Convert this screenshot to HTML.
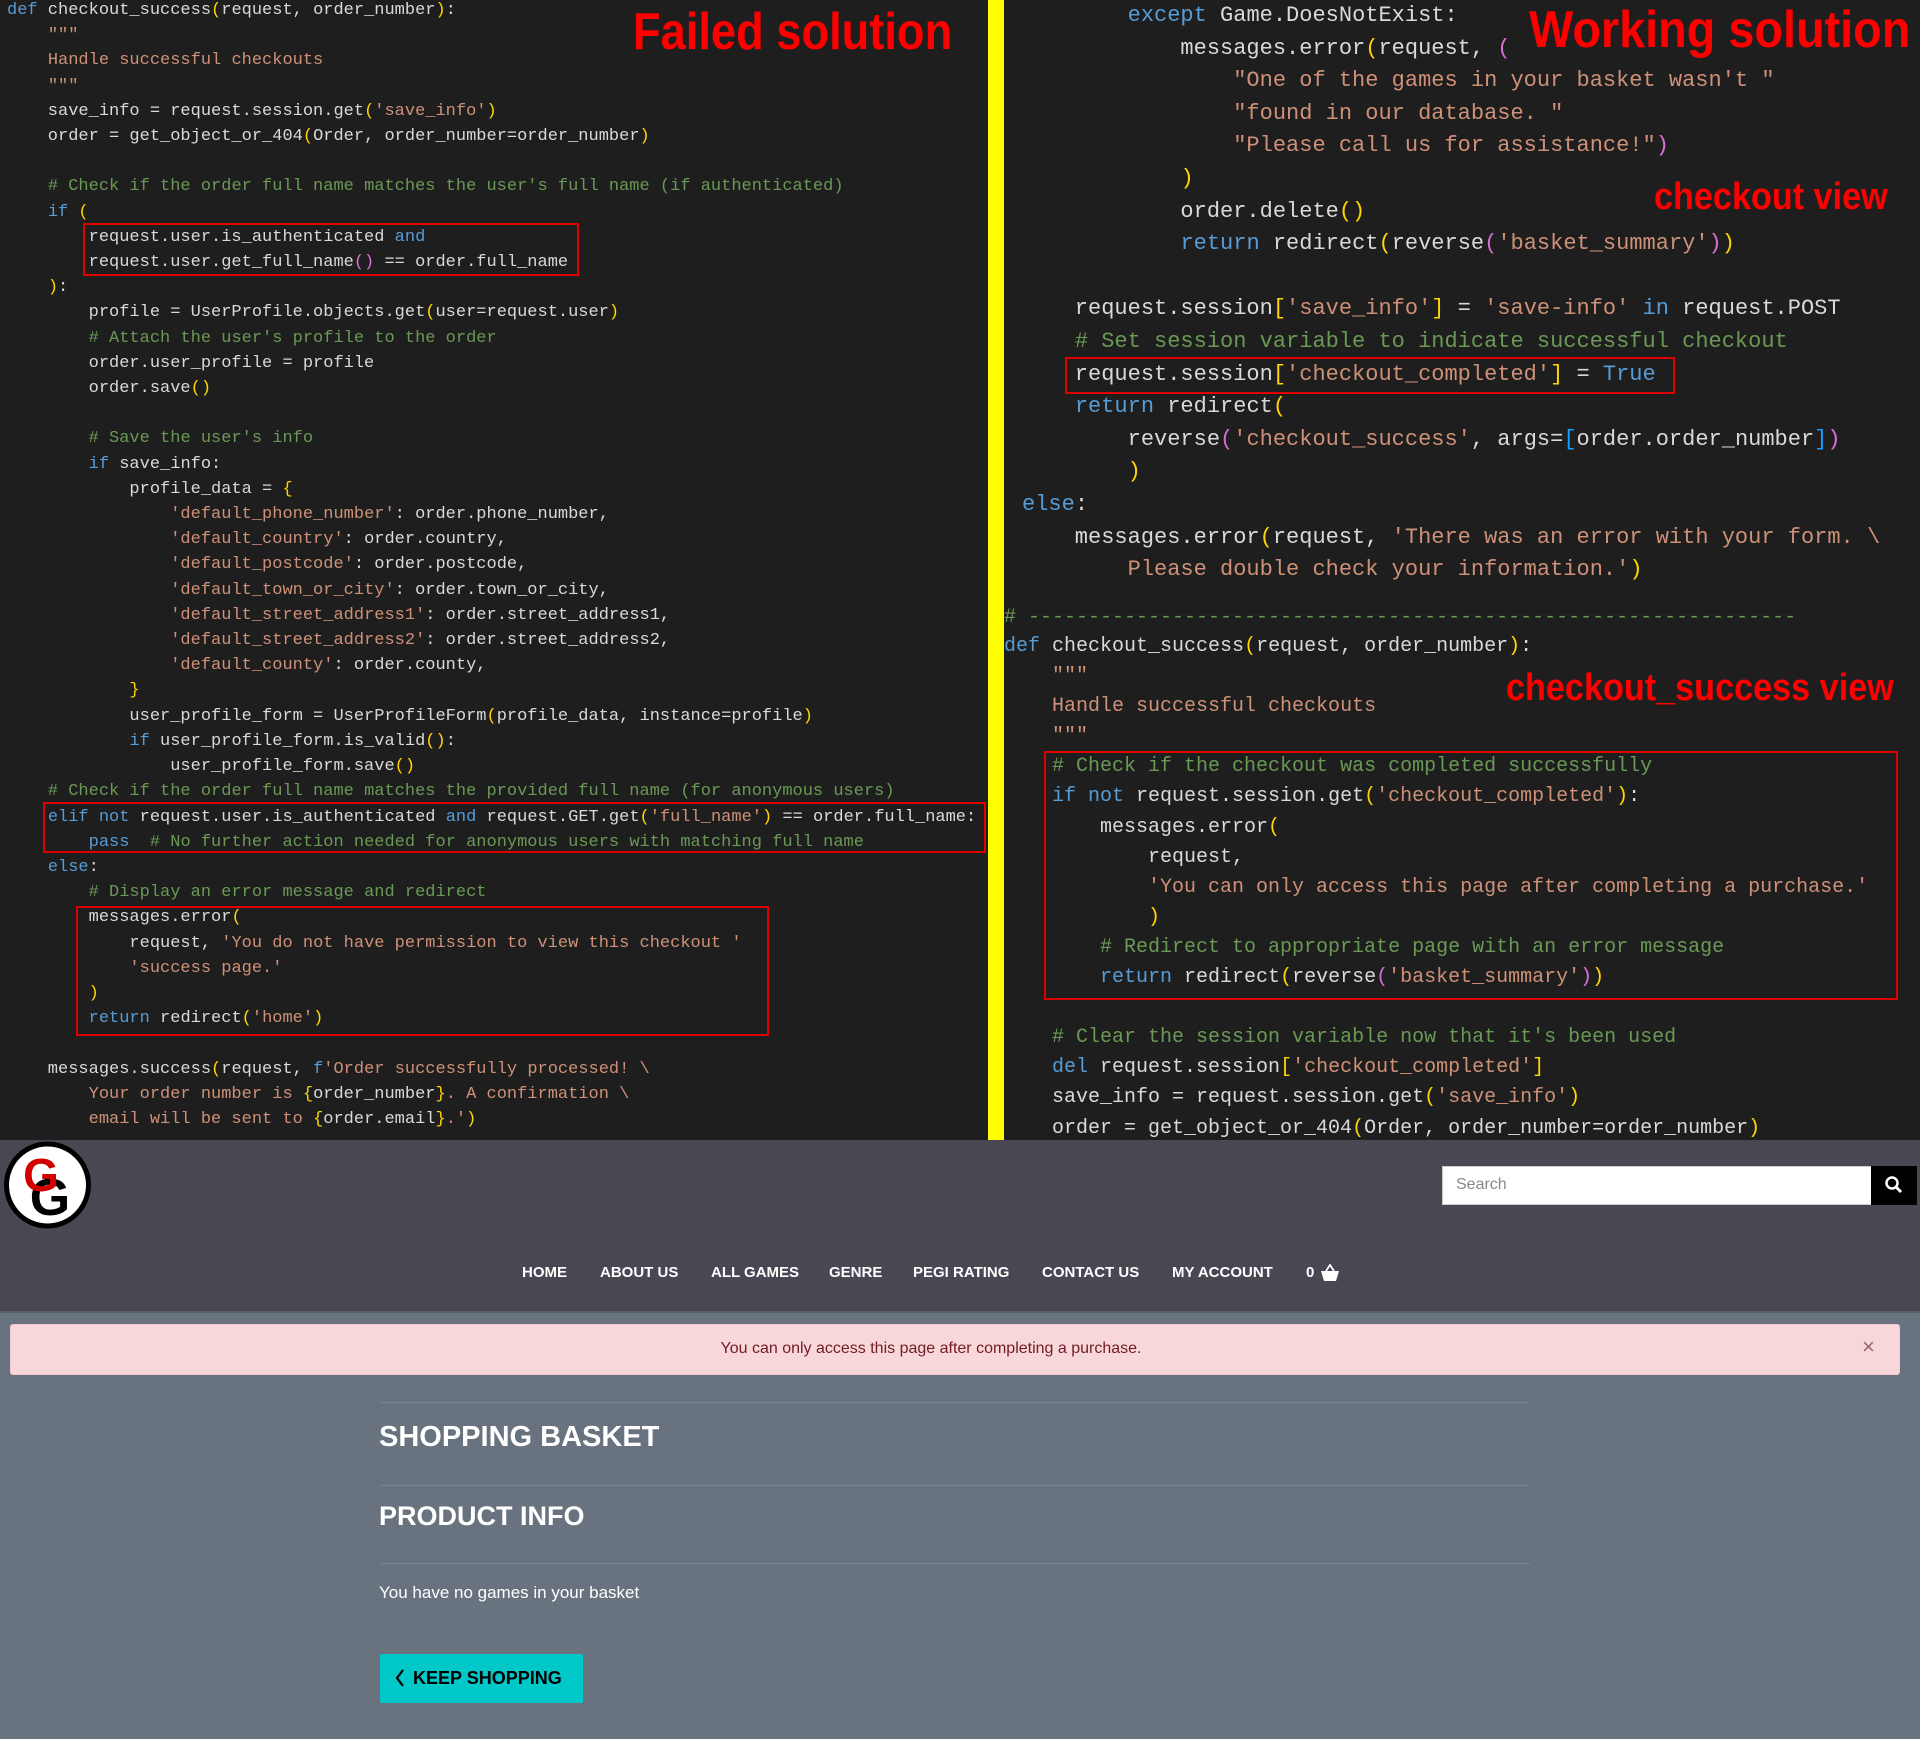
<!DOCTYPE html>
<html><head><meta charset="utf-8">
<style>
*{margin:0;padding:0;box-sizing:border-box}
body{width:1920px;height:1739px;position:relative;overflow:hidden;background:#68737f;font-family:"Liberation Sans",sans-serif}
.code{position:absolute;background:#1e1e1e;overflow:hidden}
pre{position:absolute;font-family:"Liberation Mono",monospace;color:#d9d9d9;white-space:pre}
.k{color:#569cd6}.s{color:#ce9178}.c{color:#6a9955}.y{color:#ffd700}.p{color:#da70d6}.b{color:#179fff}
.box{position:absolute;border:2px solid #e00000}
.lbl{position:absolute;color:#ff0000;font-weight:bold;white-space:nowrap;transform-origin:0 0}
#hdr{position:absolute;left:0;top:1140px;width:1920px;height:173px;background:#494852;border-bottom:2px solid #5b5f69}
nav{position:absolute;top:1264px;left:0;width:1920px;height:20px}
nav span{position:absolute;color:#fff;font-weight:bold;font-size:15px;white-space:nowrap}
</style></head><body>

<div class="code" style="left:0;top:0;width:988px;height:1140px">
<pre style="left:7px;top:-2px;font-size:17px;line-height:25.2px"><span class="k">def</span> checkout_success<span class="y">(</span>request, order_number<span class="y">)</span>:
    <span class="s">"""</span>
    <span class="s">Handle successful checkouts</span>
    <span class="s">"""</span>
    save_info = request.session.get<span class="y">(</span><span class="s">'save_info'</span><span class="y">)</span>
    order = get_object_or_404<span class="y">(</span>Order, order_number=order_number<span class="y">)</span>

    <span class="c"># Check if the order full name matches the user's full name (if authenticated)</span>
    <span class="k">if</span> <span class="y">(</span>
        request.user.is_authenticated <span class="k">and</span>
        request.user.get_full_name<span class="p">()</span> == order.full_name
    <span class="y">)</span>:
        profile = UserProfile.objects.get<span class="y">(</span>user=request.user<span class="y">)</span>
        <span class="c"># Attach the user's profile to the order</span>
        order.user_profile = profile
        order.save<span class="y">()</span>

        <span class="c"># Save the user's info</span>
        <span class="k">if</span> save_info:
            profile_data = <span class="y">{</span>
                <span class="s">'default_phone_number'</span>: order.phone_number,
                <span class="s">'default_country'</span>: order.country,
                <span class="s">'default_postcode'</span>: order.postcode,
                <span class="s">'default_town_or_city'</span>: order.town_or_city,
                <span class="s">'default_street_address1'</span>: order.street_address1,
                <span class="s">'default_street_address2'</span>: order.street_address2,
                <span class="s">'default_county'</span>: order.county,
            <span class="y">}</span>
            user_profile_form = UserProfileForm<span class="y">(</span>profile_data, instance=profile<span class="y">)</span>
            <span class="k">if</span> user_profile_form.is_valid<span class="y">()</span>:
                user_profile_form.save<span class="y">()</span>
    <span class="c"># Check if the order full name matches the provided full name (for anonymous users)</span>
    <span class="k">elif not</span> request.user.is_authenticated <span class="k">and</span> request.GET.get<span class="y">(</span><span class="s">'full_name'</span><span class="y">)</span> == order.full_name:
        <span class="k">pass</span>  <span class="c"># No further action needed for anonymous users with matching full name</span>
    <span class="k">else</span>:
        <span class="c"># Display an error message and redirect</span>
        messages.error<span class="y">(</span>
            request, <span class="s">'You do not have permission to view this checkout '</span>
            <span class="s">'success page.'</span>
        <span class="y">)</span>
        <span class="k">return</span> redirect<span class="y">(</span><span class="s">'home'</span><span class="y">)</span>

    messages.success<span class="y">(</span>request, <span class="k">f</span><span class="s">'Order successfully processed! \</span>
<span class="s">        Your order number is </span><span class="y">{</span>order_number<span class="y">}</span><span class="s">. A confirmation \</span>
<span class="s">        email will be sent to </span><span class="y">{</span>order.email<span class="y">}</span><span class="s">.'</span><span class="y">)</span></pre>
<div class="box" style="left:83px;top:223px;width:496px;height:53px"></div>
<div class="box" style="left:43px;top:802px;width:943px;height:51px"></div>
<div class="box" style="left:76px;top:906px;width:693px;height:130px"></div>
<div class="lbl" style="left:633px;top:2px;font-size:52px;transform:scaleX(0.87)">Failed solution</div>
</div>

<div style="position:absolute;left:988px;top:0;width:16px;height:1140px;background:#ffff00"></div>

<div class="code" style="left:1004px;top:0;width:916px;height:1140px">
<pre style="left:18px;top:0;font-size:22px;line-height:32.6px">        <span class="k">except</span> Game.DoesNotExist:
            messages.error<span class="y">(</span>request, <span class="p">(</span>
                <span class="s">"One of the games in your basket wasn't "</span>
                <span class="s">"found in our database. "</span>
                <span class="s">"Please call us for assistance!"</span><span class="p">)</span>
            <span class="y">)</span>
            order.delete<span class="y">()</span>
            <span class="k">return</span> redirect<span class="y">(</span>reverse<span class="p">(</span><span class="s">'basket_summary'</span><span class="p">)</span><span class="y">)</span>

    request.session<span class="y">[</span><span class="s">'save_info'</span><span class="y">]</span> = <span class="s">'save-info'</span> <span class="k">in</span> request.POST
    <span class="c"># Set session variable to indicate successful checkout</span>
    request.session<span class="y">[</span><span class="s">'checkout_completed'</span><span class="y">]</span> = <span class="k">True</span>
    <span class="k">return</span> redirect<span class="y">(</span>
        reverse<span class="p">(</span><span class="s">'checkout_success'</span>, args=<span class="b">[</span>order.order_number<span class="b">]</span><span class="p">)</span>
        <span class="y">)</span>
<span class="k">else</span>:
    messages.error<span class="y">(</span>request, <span class="s">'There was an error with your form. \</span>
<span class="s">        Please double check your information.'</span><span class="y">)</span></pre>
<pre style="left:0;top:603px;font-size:20px;line-height:30px" class="c"># ----------------------------------------------------------------</pre>
<pre style="left:0;top:632px;font-size:20px;line-height:30.1px"><span class="k">def</span> checkout_success<span class="y">(</span>request, order_number<span class="y">)</span>:
    <span class="s">"""</span>
    <span class="s">Handle successful checkouts</span>
    <span class="s">"""</span>
    <span class="c"># Check if the checkout was completed successfully</span>
    <span class="k">if not</span> request.session.get<span class="y">(</span><span class="s">'checkout_completed'</span><span class="y">)</span>:
        messages.error<span class="y">(</span>
            request,
            <span class="s">'You can only access this page after completing a purchase.'</span>
            <span class="y">)</span>
        <span class="c"># Redirect to appropriate page with an error message</span>
        <span class="k">return</span> redirect<span class="y">(</span>reverse<span class="p">(</span><span class="s">'basket_summary'</span><span class="p">)</span><span class="y">)</span>

    <span class="c"># Clear the session variable now that it's been used</span>
    <span class="k">del</span> request.session<span class="y">[</span><span class="s">'checkout_completed'</span><span class="y">]</span>
    save_info = request.session.get<span class="y">(</span><span class="s">'save_info'</span><span class="y">)</span>
    order = get_object_or_404<span class="y">(</span>Order, order_number=order_number<span class="y">)</span></pre>
<div class="box" style="left:61px;top:357px;width:610px;height:37px"></div>
<div class="box" style="left:40px;top:751px;width:854px;height:249px"></div>
<div class="lbl" style="left:525px;top:0;font-size:52px;transform:scaleX(0.9)">Working solution</div>
<div class="lbl" style="left:650px;top:176px;font-size:38px;transform:scaleX(0.9)">checkout view</div>
<div class="lbl" style="left:502px;top:667px;font-size:38px;transform:scaleX(0.9)">checkout_success view</div>
</div>

<div id="hdr"></div>
<svg style="position:absolute;left:3px;top:1141px" width="89" height="88" viewBox="0 0 89 88">
<circle cx="44.5" cy="44" r="41" fill="#fff" stroke="#000" stroke-width="5"/>
<text x="47" y="74" font-family="Liberation Sans" font-weight="bold" font-size="52" fill="#000" text-anchor="middle">G</text>
<text x="38" y="50" font-family="Liberation Sans" font-weight="bold" font-size="46" fill="#d40000" text-anchor="middle">G</text>
</svg>
<div style="position:absolute;left:1442px;top:1166px;width:430px;height:39px;background:#fff;border:1px solid #ccc"></div>
<div style="position:absolute;left:1456px;top:1176px;font-size:16px;color:#888">Search</div>
<div style="position:absolute;left:1871px;top:1166px;width:46px;height:39px;background:#000"></div>
<svg style="position:absolute;left:1884px;top:1175px" width="20" height="20" viewBox="0 0 20 20"><circle cx="8" cy="8" r="5.5" fill="none" stroke="#fff" stroke-width="2.5"/><path d="M12 12l5 5" stroke="#fff" stroke-width="3"/></svg>

<nav>
<span style="left:522px">HOME</span>
<span style="left:600px">ABOUT US</span>
<span style="left:711px">ALL GAMES</span>
<span style="left:829px">GENRE</span>
<span style="left:913px">PEGI RATING</span>
<span style="left:1042px">CONTACT US</span>
<span style="left:1172px">MY ACCOUNT</span>
<span style="left:1306px">0</span>
</nav>
<svg style="position:absolute;left:1320px;top:1264px" width="20" height="18" viewBox="0 0 20 18"><path d="M6 7L10 1L14 7" fill="none" stroke="#fff" stroke-width="1.8"/><path d="M1 7h18l-3 10H4z" fill="#fff"/></svg>

<div style="position:absolute;left:10px;top:1324px;width:1890px;height:51px;background:#f8d7da;border:1px solid #f5c6cb;border-radius:3px"></div>
<div style="position:absolute;left:0;top:1340px;width:1862px;text-align:center;font-size:16px;color:#721c24">You can only access this page after completing a purchase.</div>
<div style="position:absolute;left:1862px;top:1334px;font-size:22px;color:#a0666d">×</div>

<div style="position:absolute;left:380px;top:1402px;width:1150px;height:1px;background:#7b858f"></div>
<div style="position:absolute;left:379px;top:1421px;font-size:29px;font-weight:bold;color:#fff">SHOPPING BASKET</div>
<div style="position:absolute;left:380px;top:1485px;width:1150px;height:1px;background:#7b858f"></div>
<div style="position:absolute;left:379px;top:1501px;font-size:27px;font-weight:bold;color:#fff">PRODUCT INFO</div>
<div style="position:absolute;left:380px;top:1563px;width:1150px;height:1px;background:#7b858f"></div>
<div style="position:absolute;left:379px;top:1583px;font-size:17px;color:#fff">You have no games in your basket</div>
<div style="position:absolute;left:380px;top:1654px;width:203px;height:49px;background:#00c8c8;border-radius:2px"></div>
<svg style="position:absolute;left:394px;top:1668px" width="12" height="20" viewBox="0 0 12 20"><path d="M9 2L3 10l6 8" fill="none" stroke="#000" stroke-width="2.2"/></svg>
<div style="position:absolute;left:413px;top:1668px;font-size:18px;color:#000;font-weight:bold">KEEP SHOPPING</div>
</body></html>
